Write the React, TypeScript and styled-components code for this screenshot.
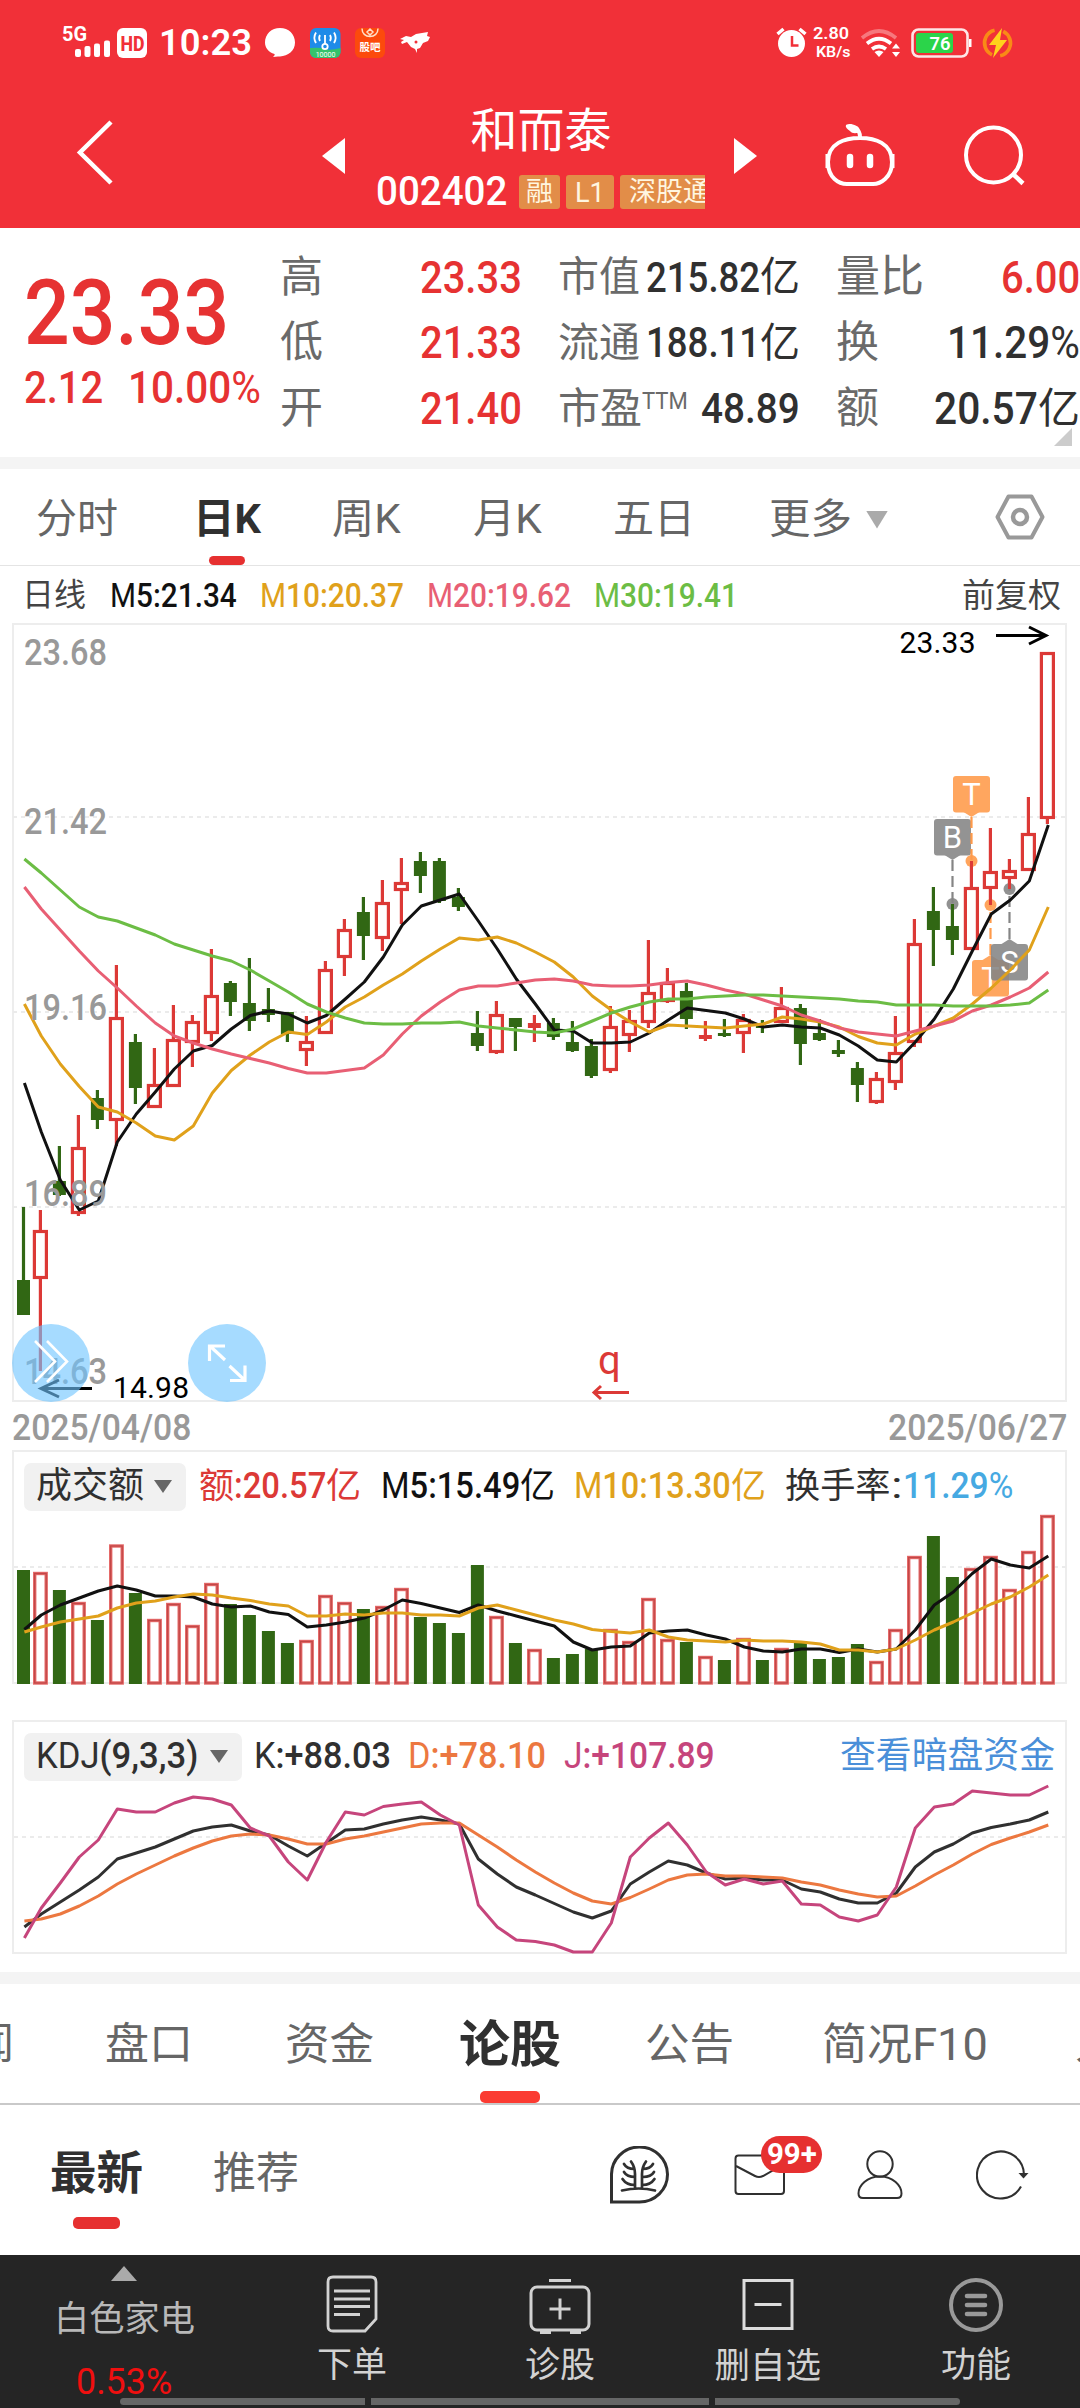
import React, { useLayoutEffect, useRef, useState } from "react";
import styled, { createGlobalStyle } from "styled-components";

const Global = createGlobalStyle`
  * { box-sizing: border-box; }
  body { margin: 0; background: #fff; }
`;

const FONT = `Roboto, "Noto Sans CJK SC", sans-serif`;

const Page = styled.main`
  width: 1080px;
  height: 2408px;
  display: flex;
  flex-direction: column;
  overflow: hidden;
  background: #fff;
  font-family: ${FONT};
  line-height: 1;
`;

/* ---------- text fitted to a fixed advance width ---------- */

type TextProps = { $size: number; $weight?: number; $color?: string; $w: number; $gap?: number };

const TextBox = styled.span<TextProps>`
  display: block;
  flex: none;
  width: ${(p) => p.$w}px;
  margin-left: ${(p) => p.$gap ?? 0}px;
  font-size: ${(p) => p.$size}px;
  font-weight: ${(p) => p.$weight ?? 400};
  color: ${(p) => p.$color ?? "inherit"};
  line-height: 1.2;
  white-space: pre;
`;

const TextRun = styled.span`
  display: inline-block;
  transform-origin: 0 50%;
`;

const Thin = styled.span`
  font-weight: 400;
`;

// Medium-weight figures keep their letters and percent signs in the regular weight.
const withThinLetters = (text: string) =>
  text.split(/([A-Z%]+)/).map((part, i) => (i % 2 ? <Thin key={i}>{part}</Thin> : part));

function Fit({ w, size, weight, color, gap, children }: {
  w: number; size: number; weight?: number; color?: string; gap?: number; children: string;
}) {
  const ref = useRef<HTMLSpanElement>(null);
  const [k, setK] = useState(1);
  useLayoutEffect(() => {
    if (ref.current) setK(w / ref.current.offsetWidth);
  }, [w, size, children]);
  return (
    <TextBox $w={w} $size={size} $weight={weight} $color={color} $gap={gap}>
      <TextRun ref={ref} style={{ transform: `scaleX(${k})` }}>
        {weight === 500 ? withThinLetters(children) : children}
      </TextRun>
    </TextBox>
  );
}

/* ---------- header ---------- */

const Header = styled.header`
  height: 228px;
  flex: none;
  background: #f13038;
  color: #fff;
`;

const StatusBar = styled.div`
  height: 84px;
  display: flex;
  justify-content: space-between;
  align-items: center;
  padding: 0 66px 0 62px;
`;

const StatusGroup = styled.div`
  display: flex;
  align-items: center;
`;

const SpeedColumn = styled.div`
  display: flex;
  flex-direction: column;
  padding-left: 6px;
  width: 50px;
`;

const TitleBar = styled.div`
  height: 144px;
  display: flex;
  align-items: flex-start;
`;

const IconSlot = styled.div<{ $left: number; $top: number }>`
  flex: none;
  margin: ${(p) => p.$top}px 0 0 ${(p) => p.$left}px;
  line-height: 0;
`;

const StockTitle = styled.div`
  width: 330px;
  margin-left: 31px;
  display: flex;
  flex-direction: column;
  align-items: center;
  padding-top: 19px;
`;

const CodeLine = styled.div`
  display: flex;
  align-items: center;
  width: 330px;
  height: 36px;
  margin-top: 15px;
`;

const Tag = styled.span<{ $w: number; $ml: number; $clip?: boolean }>`
  flex: none;
  width: ${(p) => p.$w}px;
  margin-left: ${(p) => p.$ml}px;
  height: 34px;
  display: flex;
  align-items: center;
  padding-left: 7px;
  overflow: hidden;
  background: #e28d48;
  color: #fff6e0;
  border-radius: ${(p) => (p.$clip ? "3px 0 0 3px" : "3px")};
`;

/* ---------- quote summary ---------- */

const Quote = styled.section`
  height: 229px;
  flex: none;
  display: flex;
  color: #303030;
`;

const PriceBlock = styled.div`
  width: 280px;
  padding: 31px 0 0 24px;
  color: #e63232;
`;

const ChangeRow = styled.div`
  display: flex;
  margin-top: -7px;
`;

const StatColumn = styled.div<{ $w: number; $ml: number }>`
  width: ${(p) => p.$w}px;
  margin-left: ${(p) => p.$ml}px;
  padding-top: 17px;
  flex: none;
`;

const StatRow = styled.div`
  height: 65.5px;
  display: flex;
  align-items: center;
  justify-content: space-between;
`;

const StatLabel = styled.div`
  display: flex;
  align-items: center;
  color: #6a6a6a;
`;

const StatValue = styled.div`
  display: flex;
  align-items: center;
`;

const Raised = styled.div`
  padding-bottom: 15px;
`;

const Corner = styled.div`
  margin: -14px 8px 0 auto;
  width: 0;
  height: 0;
  border-left: 18px solid transparent;
  border-bottom: 18px solid #ccc;
`;

const Divider = styled.div<{ $mt?: number }>`
  height: 12px;
  flex: none;
  margin-top: ${(p) => p.$mt ?? 0}px;
  background: #f4f4f4;
`;

/* ---------- tabs ---------- */

const PeriodTabs = styled.nav`
  height: 97px;
  flex: none;
  display: flex;
  border-bottom: 1.5px solid #e4e4e4;
  color: #666;
`;

const Tab = styled.div<{ $ml: number; $pt: number; $active?: boolean }>`
  height: 100%;
  flex: none;
  margin-left: ${(p) => p.$ml}px;
  padding-top: ${(p) => p.$pt}px;
  display: flex;
  flex-direction: column;
  justify-content: space-between;
  align-items: center;
  color: ${(p) => (p.$active ? "#303030" : "#666")};
`;

const Underline = styled.i<{ $w: number; $h: number; $c: string; $mb?: number }>`
  display: block;
  width: ${(p) => p.$w}px;
  height: ${(p) => p.$h}px;
  margin-bottom: ${(p) => p.$mb ?? 0}px;
  border-radius: 5px;
  background: ${(p) => p.$c};
`;

const Legend = styled.div<{ $h: number; $pl: number; $pt?: number }>`
  height: ${(p) => p.$h}px;
  padding: ${(p) => p.$pt ?? 0}px 0 0 ${(p) => p.$pl}px;
  flex: none;
  display: flex;
  align-items: center;
`;

const DateRow = styled.div`
  height: 48px;
  flex: none;
  padding: 1px 13px 0 12px;
  display: flex;
  align-items: center;
  justify-content: space-between;
`;

const Plot = styled.svg`
  display: block;
  flex: none;
  overflow: visible;
`;

const PanelPlot = styled(Plot)`
  margin-left: -14px;
`;

const Panel = styled.section<{ $mt: number }>`
  width: 1055px;
  height: 234px;
  flex: none;
  margin: ${(p) => p.$mt}px 0 0 12px;
  border: 2px solid #ededed;
`;

const Chip = styled.div<{ $w: number }>`
  width: ${(p) => p.$w}px;
  height: 48px;
  flex: none;
  margin-left: 10px;
  padding: 0 14px 0 12px;
  border-radius: 7px;
  background: #f1f1f1;
  display: flex;
  align-items: center;
  justify-content: space-between;
`;

const Caret = styled.i<{ $c: string; $w: number; $h: number; $up?: boolean; $ml?: number }>`
  display: block;
  flex: none;
  margin-left: ${(p) => p.$ml ?? 0}px;
  width: ${(p) => p.$w}px;
  height: ${(p) => p.$h}px;
  background: ${(p) => p.$c};
  clip-path: ${(p) => (p.$up ? "polygon(50% 0, 100% 100%, 0 100%)" : "polygon(0 0, 100% 0, 50% 100%)")};
`;

const MoreTab = styled.div`
  display: flex;
  align-items: center;
`;

const InfoTabs = styled.nav`
  height: 121px;
  flex: none;
  display: flex;
  border-bottom: 2px solid #c9c9c9;
  overflow: hidden;
`;

const FeedTabs = styled.nav`
  height: 150px;
  flex: none;
  display: flex;
`;

const MailSlot = styled(IconSlot)`
  position: relative;
`;

const Badge = styled.span`
  position: absolute;
  left: 27px;
  top: -18px;
  width: 61px;
  height: 37px;
  padding: 0 0 2px 6px;
  border-radius: 19px;
  background: #e63030;
  color: #fff;
  display: flex;
  align-items: center;
`;

/* ---------- bottom bar ---------- */

const BottomBar = styled.footer`
  height: 153px;
  flex: none;
  background: #252525;
  color: #d2d2d2;
  display: flex;
  flex-direction: column;
`;

const BottomItems = styled.div`
  display: flex;
  height: 143px;
`;

const Sector = styled.div`
  width: 248px;
  display: flex;
  flex-direction: column;
  align-items: center;
  padding-top: 11px;
`;

const SectorName = styled.div`
  margin: 18px 0 19px;
`;

const Action = styled.div`
  width: 208px;
  display: flex;
  flex-direction: column;
  align-items: center;
  padding-top: 18px;
  gap: 10px;
  svg { display: block; }
`;

const GestureRow = styled.div`
  display: flex;
  gap: 6px;
  padding-left: 120px;
`;

const GestureBar = styled.i<{ $w: number; $r: string }>`
  width: ${(p) => p.$w}px;
  height: 7px;
  background: #666;
  border-radius: ${(p) => p.$r};
`;

/* ---------- data ---------- */

// up/down, high, body top, body bottom, low
type Candle = [0 | 1, number, number, number, number];
const candles: Candle[] = [
  [0, 1207, 1280, 1315, 1315], [1, 1210, 1230, 1279, 1371], [0, 1146, 1181, 1195, 1196], [1, 1115, 1147, 1214, 1216],
  [0, 1090, 1098, 1120, 1129], [1, 965, 1017, 1121, 1146], [0, 1034, 1042, 1088, 1104], [1, 1048, 1084, 1108, 1108],
  [1, 1005, 1039, 1087, 1087], [1, 1015, 1021, 1043, 1067], [1, 949, 995, 1034, 1041], [0, 981, 983, 1002, 1016],
  [0, 958, 1003, 1021, 1031], [0, 988, 1009, 1015, 1022], [0, 1012, 1012, 1034, 1042], [1, 1016, 1041, 1051, 1066],
  [1, 961, 969, 1034, 1034], [1, 919, 929, 958, 976], [0, 897, 912, 936, 960], [1, 880, 902, 939, 951],
  [1, 858, 882, 891, 924], [0, 852, 861, 876, 893], [0, 858, 861, 901, 903], [0, 888, 897, 907, 911],
  [0, 1011, 1033, 1046, 1051], [1, 1001, 1014, 1053, 1054], [0, 1018, 1018, 1027, 1051], [1, 1015, 1023, 1028, 1042],
  [0, 1018, 1023, 1037, 1040], [0, 1021, 1042, 1051, 1052], [0, 1039, 1046, 1076, 1078], [1, 1006, 1026, 1071, 1073],
  [1, 1010, 1020, 1036, 1052], [1, 940, 992, 1023, 1028], [1, 968, 982, 1002, 1003], [0, 983, 991, 1019, 1029],
  [1, 1021, 1035, 1039, 1041], [0, 1019, 1033, 1036, 1037], [1, 1014, 1019, 1034, 1053], [0, 1020, 1026, 1028, 1033],
  [1, 987, 1007, 1023, 1023], [0, 1004, 1008, 1044, 1065], [0, 1019, 1033, 1040, 1041], [0, 1040, 1050, 1054, 1057],
  [0, 1062, 1068, 1085, 1102], [1, 1072, 1078, 1103, 1104], [1, 1016, 1052, 1083, 1090], [1, 919, 943, 1043, 1047],
  [0, 887, 911, 930, 966], [0, 904, 926, 940, 955], [1, 861, 887, 950, 950], [1, 828, 871, 889, 905],
  [1, 859, 870, 879, 889], [1, 797, 833, 871, 871], [1, 652, 652, 819, 824],
];

const ma5 = [1083, 1132, 1180, 1210, 1201, 1142, 1114, 1092, 1069, 1051, 1045.5, 1029, 1015.5, 1011, 1014, 1023, 1015.5, 999, 982, 957, 925, 906, 900, 894, 921, 949, 979, 1004, 1030, 1031, 1043, 1043, 1042, 1033, 1020, 1008, 1010.5, 1013, 1019, 1027, 1025, 1027, 1028, 1035, 1046, 1060, 1062, 1042, 1019, 989, 951, 914, 900, 881, 825];
const ma10 = [1004, 1036, 1064, 1086.5, 1107, 1112, 1123, 1136, 1140, 1126, 1093, 1070.5, 1055, 1042, 1032, 1034.5, 1022, 1007, 997, 985, 974, 961, 949, 938, 940, 937, 943, 952, 962, 977, 996, 1010, 1022, 1032, 1025, 1026, 1027, 1028, 1026, 1024, 1017, 1019, 1022, 1027, 1036.5, 1043, 1045, 1034, 1026, 1018, 1004, 988, 970, 950, 907];
const ma20 = [887, 909, 930, 951, 971, 988, 1006, 1023, 1036, 1043, 1049, 1054, 1058.5, 1063, 1068.5, 1073, 1073, 1070.5, 1068, 1055, 1034, 1016, 1002, 990, 986, 986, 983, 980, 979, 981, 985, 986, 986, 985, 982.5, 981, 985, 990, 994, 1000, 1006, 1015, 1021, 1028, 1032, 1034, 1036, 1031, 1026, 1021, 1011, 1005, 997, 988, 972];
const ma30 = [859, 873, 890, 907, 917, 921, 928, 935, 944, 950, 956, 961, 970, 981, 992, 1004, 1012, 1018, 1023, 1024, 1024, 1023, 1023, 1022, 1026, 1028, 1030, 1032, 1033, 1029, 1021, 1013, 1007, 1002, 999, 999, 997, 996, 995, 995, 996, 997, 998, 999, 1001, 1002, 1005, 1005, 1005, 1006, 1006, 1006, 1005, 1003, 990];

const volTops = [1570, 1572, 1590, 1602, 1620, 1544.5, 1593, 1619, 1603, 1625, 1583, 1604, 1615, 1631, 1643, 1640, 1595, 1602, 1609, 1606, 1588, 1617, 1623, 1633, 1565, 1616, 1643, 1649, 1658, 1654, 1649, 1629, 1641, 1598, 1639, 1642, 1656, 1660, 1638, 1660, 1648, 1643, 1659, 1657, 1644, 1661, 1629, 1556, 1536, 1577, 1568, 1556, 1589, 1551, 1515];
const vol5 = [1629.5, 1615, 1605, 1598, 1591, 1586, 1590, 1596, 1596, 1597, 1604, 1607, 1606, 1612, 1614.5, 1627, 1625, 1622, 1618, 1610, 1600, 1603.5, 1608, 1612.5, 1605, 1611, 1616, 1621, 1626, 1642, 1650, 1647, 1646, 1633, 1631, 1630, 1635, 1639, 1647, 1651, 1652, 1649, 1649, 1652.5, 1649, 1652, 1649, 1630, 1605, 1592, 1573.5, 1559, 1565, 1568, 1556];
const vol10 = [1632, 1627, 1622, 1619, 1616, 1608, 1603, 1601, 1597, 1594, 1595, 1598, 1600.5, 1604, 1606, 1616, 1616, 1614, 1615, 1613, 1613, 1615, 1615, 1616, 1608, 1605, 1610, 1615, 1620, 1624, 1629.5, 1631.5, 1633, 1630, 1637, 1640, 1641, 1642, 1640, 1641, 1641, 1642, 1644, 1650, 1650, 1652, 1649, 1640, 1630, 1622, 1613, 1604, 1597, 1587, 1575];

const kLine = [1927, 1914, 1902, 1890, 1877, 1859, 1853, 1847, 1839, 1831, 1827, 1825, 1831, 1835, 1846, 1856, 1843, 1830, 1829, 1824, 1820, 1817, 1820, 1824, 1859, 1874, 1887, 1895, 1903.5, 1912, 1918, 1911, 1884, 1872, 1861, 1865, 1873, 1879, 1878, 1880, 1880, 1889, 1892, 1899, 1903, 1903, 1893, 1867, 1852, 1844, 1833, 1827.5, 1824, 1820, 1812];
const dLine = [1921, 1919, 1914, 1906, 1896, 1884, 1874, 1865, 1856, 1848, 1841, 1836, 1834, 1835, 1839, 1844, 1844, 1839, 1836, 1832, 1828, 1824, 1823, 1823, 1835, 1847, 1860, 1872, 1883, 1893, 1901, 1904, 1897.5, 1889, 1880, 1875, 1874, 1876, 1876, 1877, 1878, 1882, 1885, 1890, 1894, 1897, 1896, 1886, 1875, 1865, 1854, 1844.5, 1838, 1832, 1825];
const jLine = [1938, 1908, 1883, 1857, 1840, 1809, 1812, 1812, 1803, 1797, 1799, 1805, 1828, 1836, 1862, 1880, 1842, 1812, 1815, 1806.5, 1804, 1802, 1815, 1825, 1905, 1927, 1940, 1941.5, 1945, 1952, 1952, 1923, 1857, 1838, 1823, 1845, 1872, 1885, 1879, 1884, 1881, 1904, 1905, 1917, 1921, 1915, 1887, 1828, 1807, 1804, 1791, 1793, 1795, 1795, 1786];

const GREEN = "#316714";
const RED = "#dc3936";
const cx = (i: number) => (i === 0 ? 23.5 : 40.4 + 19 * (i - 1));
const path = (ys: number[]) => ys.map((y, i) => `${(cx(i) + 0.9).toFixed(1)},${y}`).join(" ");

function Line({ ys, c }: { ys: number[]; c: string }) {
  return <polyline points={path(ys)} fill="none" stroke={c} strokeWidth={3} strokeLinejoin="round" />;
}

function Marker({ x, y, ch, c, box }: { x: number; y: number; ch: string; c: string; box: number }) {
  const down = box < y;
  const tip = down ? box + 41 : box - 5;
  return (
    <g>
      <line x1={x} x2={x} y1={tip} y2={y} stroke={c} strokeWidth={2.2} strokeDasharray="11 5" />
      <circle cx={x} cy={y} r={6} fill={c} opacity={0.9} />
      <g opacity={0.88}>
        <rect x={x - 18.5} y={box} width={37} height={36.5} rx={3} fill={c} />
        <path d={down ? `M${x - 8} ${box + 36}h16l-8 5z` : `M${x - 8} ${box}h16l-8 -5z`} fill={c} />
      </g>
      <text x={x} y={box + 29} fontSize={31} fill="#fff" textAnchor="middle" fontFamily="Roboto">{ch}</text>
    </g>
  );
}

function CandleChart() {
  const axis: [string, number][] = [["23.68", 665], ["21.42", 834], ["19.16", 1020], ["16.89", 1206], ["14.63", 1384]];
  return (
    <Plot width={1080} height={780} viewBox="0 623 1080 780" fontFamily="Roboto">
      <rect x={13} y={624} width={1053} height={777} fill="#fff" stroke="#ededed" strokeWidth={2} />
      {[817, 1012, 1207].map((y) => (
        <line key={y} x1={13} x2={1066} y1={y} y2={y} stroke="#ebebeb" strokeWidth={2} strokeDasharray="4 4" />
      ))}
      {candles.map(([up, hi, top, bot, lo], i) => {
        const x = cx(i);
        const c = up ? RED : GREEN;
        return (
          <g key={i} stroke={c} strokeWidth={3.2}>
            {hi < top && <line x1={x} x2={x} y1={hi} y2={top} />}
            {lo > bot && <line x1={x} x2={x} y1={bot} y2={lo} />}
            {up && bot - top > 5 ? (
              <rect x={x - 6} y={top + 1.5} width={12} height={bot - top - 3} fill="#fff" />
            ) : (
              <rect x={x - 6.5} y={top} width={13} height={bot - top} fill={c} stroke="none" />
            )}
          </g>
        );
      })}
      <Marker x={952.5} y={904} ch="B" c="#858585" box={819} />
      <Marker x={971.5} y={861} ch="T" c="#ff9a4a" box={776} />
      <Marker x={990.5} y={905} ch="T" c="#ff9a4a" box={960} />
      <Marker x={1009.5} y={889} ch="S" c="#858585" box={944} />
      <path d="M971.5 861v10M990.5 895v10M1009.5 880v9" stroke={RED} strokeWidth={3} />
      <path d="M952.5 904v10" stroke={GREEN} strokeWidth={3} />
      <Line ys={ma5} c="#111" />
      <Line ys={ma10} c="#e0a11b" />
      <Line ys={ma20} c="#e85f74" />
      <Line ys={ma30} c="#6cbd45" />
      {axis.map(([t, y]) => (
        <text key={t} x={24} y={y} fontSize={36.5} fontWeight={500} fill="#999" textLength={83} lengthAdjust="spacingAndGlyphs">{t}</text>
      ))}
      <text x={899.5} y={653} fontSize={30} fill="#000" textLength={76}>23.33</text>
      <path d="M996 635.5h50M1029 627l17 8.5-17 8.5" fill="none" stroke="#000" strokeWidth={3} />
      <text x={113} y={1398} fontSize={30} fill="#000" textLength={76}>14.98</text>
      <path d="M92 1388.5h-51M59 1380l-18 8.5 18 8.5" fill="none" stroke="#000" strokeWidth={3} />
      <text x={598} y={1374} fontSize={40} fill={RED}>q</text>
      <path d="M629 1392.5h-35M601 1386l-7 6.5 7 6.5" fill="none" stroke={RED} strokeWidth={3} />
      <circle cx={51} cy={1363} r={39} fill="rgb(111,197,255)" opacity={0.62} />
      <path d="M35 1341l20 20.5-20 20.5M47 1341l20 20.5-20 20.5" fill="none" stroke="#fff" strokeWidth={2.6} />
      <circle cx={227} cy={1363} r={39} fill="rgb(111,197,255)" opacity={0.62} />
      <path d="M225 1360l-15-14M225 1346h-15.5v15M229.5 1366l15 14M230 1380.5h15v-15" fill="none" stroke="#fff" strokeWidth={3.2} />
    </Plot>
  );
}

function VolumeChart() {
  return (
    <PanelPlot width={1080} height={161} viewBox="0 1521 1080 161">
      <line x1={14} x2={1066} y1={1567} y2={1567} stroke="#ebebeb" strokeWidth={2} strokeDasharray="4 4" />
      {volTops.map((top, i) => {
        const x = cx(i);
        if (!candles[i][0]) return <rect key={i} x={x - 6.5} y={top} width={13} height={1684 - top} fill={GREEN} />;
        return (
          <g key={i}>
            <rect x={x - 5.7} y={top + 1.5} width={11.5} height={1681.5 - top} fill="#fff" stroke="#e56a69" strokeWidth={3.4} />
            <rect x={x - 5.7} y={top + 1.5} width={11.5} height={1681.5 - top} fill="none" stroke="#c24747" strokeWidth={1.3} />
          </g>
        );
      })}
      <Line ys={vol5} c="#111" />
      <Line ys={vol10} c="#e0a11b" />
    </PanelPlot>
  );
}

function KdjChart() {
  return (
    <PanelPlot width={1080} height={161} viewBox="0 1791 1080 161">
      <line x1={14} x2={1066} y1={1837} y2={1837} stroke="#ebebeb" strokeWidth={2} strokeDasharray="4 4" />
      <Line ys={kLine} c="#303030" />
      <Line ys={dLine} c="#ec7840" />
      <Line ys={jLine} c="#c6457c" />
    </PanelPlot>
  );
}

/* ---------- icons ---------- */

function StatusLeftIcons() {
  return (
    <Plot width={190} height={48} viewBox="62 17 190 48">
      <text x={62} y={40} fontSize={20} fontWeight={700} fill="#fff" fontFamily="Roboto" textLength={25} lengthAdjust="spacingAndGlyphs">5G</text>
      <g fill="#fff">
        <rect x={75} y={48} width={6} height={8} rx={2} />
        <rect x={84.5} y={45} width={6} height={11} rx={2} />
        <rect x={94} y={42.5} width={6} height={13.5} rx={2} />
        <rect x={104} y={39.5} width={6} height={16.5} rx={2} />
        <rect x={117} y={27} width={30} height={30} rx={6} />
      </g>
      <text x={120.5} y={49.5} fontSize={21} fontWeight={800} fill="#f13038" fontFamily="Roboto" textLength={24} lengthAdjust="spacingAndGlyphs">HD</text>
      <text x={159} y={54} fontSize={36} fontWeight={600} fill="#fff" fontFamily="Roboto" textLength={93} lengthAdjust="spacingAndGlyphs">10:23</text>
    </Plot>
  );
}

function NotificationIcons() {
  return (
    <Plot width={180} height={48} viewBox="252 17 180 48">
      <path d="M280 27c8.500 0 15 6 15 14.500S288 55 280 55.500h-2l-5 .5c1.500-1.500 2-2 1.500-3-6-2-9.500-6-9.500-11.500C265 33 271.500 27 280 27z" fill="#fff" />
      <rect x={310} y={27} width={30.5} height={30} rx={6} fill="#1f8be8" />
      <path d="M310 47q10-1 15 1t15.500-1v4a6 6 0 0 1-6 6H316a6 6 0 0 1-6-6z" fill="#35c26b" />
      <g fill="none" stroke="#fff" strokeWidth={1.8}>
        <path d="M316 31.500a10 10 0 0 0 0 10.500M334 31.500a10 10 0 0 1 0 10.500M320 34a6 6 0 0 0 0 6M330 34a6 6 0 0 1 0 6M325 34v9" />
        <circle cx={325} cy={45.5} r={2.7} />
      </g>
      <text x={325.5} y={56} fontSize={7} fill="#fff" textAnchor="middle" fontFamily="Roboto">10000</text>
      <rect x={355} y={27} width={30} height={30} rx={6} fill="#fc4a0c" />
      <path d="M362 27.500c0 5 3.500 8 8 8s8-3 8-8M367 31l3-3 3 3-3 3z" fill="none" stroke="#ffe0c8" strokeWidth={1.5} />
      <text x={370} y={50} fontSize={10.5} fontWeight={700} fill="#fff" textAnchor="middle" fontFamily="Noto Sans CJK SC">股吧</text>
      <path d="M400 38l6-3 5 1 5-3 6-1 6-1-1 4 3 1-2 4-5 2-3 5-3 1v4l-2-4-4-2-4-5-5 2-1-2 3-2z" fill="#fff" />
      <circle cx={416} cy={41} r={1.5} fill="#f13038" />
    </Plot>
  );
}

function AlarmIcon() {
  return (
    <svg width={31} height={32} viewBox="776 26 31 32">
      <circle cx={791.5} cy={43.5} r={13.5} fill="#fff" />
      <path d="M777.500 34l6-5M805.500 34l-6-5" stroke="#fff" strokeWidth={3.5} />
      <path d="M792 36v9.500h6.500" stroke="#f13038" strokeWidth={2.5} fill="none" />
    </svg>
  );
}

function StatusRightIcons() {
  return (
    <Plot width={157} height={48} viewBox="858 17 157 48">
      <g fill="none" stroke="#fff" strokeWidth={3.7}>
        <path d="M863 37q17-14 34 0" opacity={0.35} />
        <path d="M868 42.500q12-9.500 24 0" />
        <path d="M873 48q7-5 14 0" />
      </g>
      <path d="M880 56l-4.500-5q4.500-3 9 0zM893 47.500l4-5 4 5zM893 51l4 5 4-5z" fill="#fff" />
      <rect x={913.5} y={28.5} width={55} height={27} rx={6} fill="none" stroke="#fff" strokeOpacity={0.88} strokeWidth={2.6} />
      <rect x={917} y={32} width={37} height={20} rx={3} fill="#2bd44a" />
      <rect x={970} y={38} width={2.5} height={8} fill="#fff" />
      <text x={930.5} y={48.5} fontSize={18.5} fontWeight={600} fill="#fff" fontFamily="Roboto" textLength={21} lengthAdjust="spacingAndGlyphs">76</text>
      <circle cx={998.5} cy={42} r={13} fill="none" stroke="#f98a16" strokeWidth={3.6} strokeDasharray="32 8.84" transform="rotate(115 998.5 42)" />
      <path d="M1003 27l-13 17h7l-3 13 14-18h-7z" fill="#ffd21c" />
    </Plot>
  );
}

const BackIcon = () => (
  <svg width={38} height={66} viewBox="0 0 38 66"><path d="M35 2L4 32.500 35 63" fill="none" stroke="#fff" strokeWidth={4.5} /></svg>
);

const RobotIcon = () => (
  <svg width={70} height={64} viewBox="826 122 70 64" fill="none" stroke="#fff" strokeWidth={4}>
    <path d="M861 138c15 0 32 5 32 24 0 16-12 22-19 22h-26c-8 0-19-6-19-22 0-19 17-24 32-24zM861 138c0-5-1-8-4-8" />
    <path d="M851 124c3 0 10 2 10 7-2 3-8 3-10 0-3-2-5-4-4-6 1-1 3-1 4-1z" fill="#fff" stroke="none" />
    <path d="M828 154v14M894 154v14" strokeWidth={3} />
    <path d="M851 157v8M871 157v8" strokeWidth={6.5} strokeLinecap="round" />
  </svg>
);

const SearchIcon = () => (
  <svg width={62} height={62} viewBox="965 125 62 62" fill="none" stroke="#fff" strokeWidth={4}>
    <circle cx={994.5} cy={155} r={27.5} /><path d="M1014 174l10 9.500" strokeWidth={4.5} />
  </svg>
);

const SettingsIcon = () => (
  <svg width={50} height={48} viewBox="995 493 50 48" fill="none" stroke="#999" strokeLinejoin="round">
    <path d="M1008.500 496.500h23l11 20.500-11 20.500h-23l-11-20.500z" strokeWidth={4} />
    <circle cx={1020} cy={517} r={7} strokeWidth={4.5} />
  </svg>
);

const LeafIcon = () => (
  <svg width={59} height={58} viewBox="0 0 59 58" fill="none" stroke="#303030" strokeWidth={2.7}>
    <path d="M1.500 56V29A28 27.500 0 1 1 29.500 56z" strokeWidth={3} />
    <path d="M25 42V28q0-7-4-12.500M32 42V28q0-7 4-12.500M12 44.500q17-4 33 0M14 18q3 5 10 5M43 18q-3 5-10 5M14 26q3 5 11 5M44 26q-3 5-11 5M12.500 33q4 6 12 6M44.500 33q-4 6-12 6" strokeLinecap="round" />
  </svg>
);

const MailIcon = () => (
  <svg width={52} height={42} viewBox="0 0 52 42" fill="none" stroke="#303030" strokeWidth={2}>
    <rect x={1.5} y={1.5} width={48.5} height={38.5} rx={3} />
    <path d="M2 12l19 10q4 2 8 0l21-12" />
  </svg>
);

const PersonIcon = () => (
  <svg width={46} height={50} viewBox="0 0 46 50" fill="none" stroke="#303030" strokeWidth={2}>
    <circle cx={23} cy={14} r={12.7} />
    <path d="M23 26.500c13 0 21.500 9 21.500 17 0 3-2 4.500-4.500 4.500H6c-2.500 0-4.500-1.500-4.500-4.500 0-8 8.500-17 21.500-17z" />
  </svg>
);

const RefreshIcon = () => (
  <svg width={54} height={50} viewBox="0 0 54 50" fill="none" stroke="#303030" strokeWidth={2.1}>
    <path d="M45 36.500A23.500 23.500 0 1 1 48 25" /><path d="M42.500 23h10l-5 5.500z" fill="#303030" stroke="none" />
  </svg>
);

const OrderIcon = () => (
  <svg width={54} height={62} viewBox="0 0 54 62" fill="none" stroke="#d2d2d2" strokeWidth={2.8}>
    <path d="M8 4h38q5 0 5 5v37L40 58H8q-5 0-5-5V9q0-5 5-5z" />
    <path d="M9 18h36M9 26h36M9 33.500h36M9 41.500h26" strokeWidth={3} />
  </svg>
);

const DiagnoseIcon = () => (
  <svg width={62} height={62} viewBox="0 0 62 62" fill="none" stroke="#d2d2d2" strokeWidth={3}>
    <rect x={2} y={14} width={58} height={43} rx={6} />
    <path d="M20 7.500h22M31 25.500v21M20.500 36h21" /><path d="M11 59h11M41 59h11" strokeWidth={4} />
  </svg>
);

const RemoveIcon = () => (
  <svg width={54} height={62} viewBox="0 0 54 62" fill="none" stroke="#dcdcdc" strokeWidth={3}>
    <rect x={3} y={7.5} width={48} height={48} /><path d="M13.500 31.500h27" />
  </svg>
);

const MenuIcon = () => (
  <svg width={54} height={62} viewBox="0 0 54 62" fill="none" stroke="#999">
    <circle cx={27} cy={32} r={25} strokeWidth={4} /><path d="M18 23h18M18 32h18M18 41h18" strokeWidth={4.6} strokeLinecap="round" />
  </svg>
);

/* ---------- page ---------- */

export default function App() {
  return (
    <Page>
      <Global />
      <Header>
        <StatusBar>
          <StatusGroup>
            <StatusLeftIcons />
            <NotificationIcons />
          </StatusGroup>
          <StatusGroup>
            <AlarmIcon />
            <SpeedColumn>
              <Fit w={36} size={17} weight={600}>2.80</Fit>
              <Fit w={34} size={15} weight={600} gap={3}>KB/s</Fit>
            </SpeedColumn>
            <StatusRightIcons />
          </StatusGroup>
        </StatusBar>
        <TitleBar>
          <IconSlot $left={76} $top={36}><BackIcon /></IconSlot>
          <IconSlot $left={208} $top={54}>
            <svg width={23} height={36}><path d="M0 18L23 0v36z" fill="#fff" /></svg>
          </IconSlot>
          <StockTitle>
            <Fit w={141} size={47}>和而泰</Fit>
            <CodeLine>
              <Fit w={131} size={40} weight={500}>002402</Fit>
              <Tag $w={41} $ml={12}><Fit w={27} size={27}>融</Fit></Tag>
              <Tag $w={48} $ml={6}><Fit w={30} size={28} gap={2}>L1</Fit></Tag>
              <Tag $w={85} $ml={6} $clip><Fit w={81} size={27} gap={2}>深股通</Fit></Tag>
            </CodeLine>
          </StockTitle>
          <IconSlot $left={28} $top={54}>
            <svg width={23} height={36}><path d="M23 18L0 0v36z" fill="#fff" /></svg>
          </IconSlot>
          <IconSlot $left={68} $top={38}><RobotIcon /></IconSlot>
          <IconSlot $left={69} $top={41}><SearchIcon /></IconSlot>
        </TitleBar>
      </Header>

      <Quote>
        <PriceBlock>
          <Fit w={205} size={91} weight={500}>23.33</Fit>
          <ChangeRow>
            <Fit w={79} size={45} weight={500}>2.12</Fit>
            <Fit w={133} size={45} weight={500} gap={25}>10.00%</Fit>
          </ChangeRow>
        </PriceBlock>
        <StatColumn $w={242} $ml={0}>
          {[["高", "23.33"], ["低", "21.33"], ["开", "21.40"]].map(([l, v]) => (
            <StatRow key={l}>
              <StatLabel><Fit w={43} size={43}>{l}</Fit></StatLabel>
              <Fit w={102} size={45} weight={500} color="#e63232">{v}</Fit>
            </StatRow>
          ))}
        </StatColumn>
        <StatColumn $w={242} $ml={36}>
          <StatRow>
            <StatLabel><Fit w={82} size={41}>市值</Fit></StatLabel>
            <StatValue><Fit w={114} size={43} weight={500}>215.82</Fit><Fit w={40} size={41}>亿</Fit></StatValue>
          </StatRow>
          <StatRow>
            <StatLabel><Fit w={82} size={41}>流通</Fit></StatLabel>
            <StatValue><Fit w={114} size={43} weight={500}>188.11</Fit><Fit w={40} size={41}>亿</Fit></StatValue>
          </StatRow>
          <StatRow>
            <StatLabel>
              <Fit w={84} size={42}>市盈</Fit>
              <Raised><Fit w={46} size={24}>TTM</Fit></Raised>
            </StatLabel>
            <Fit w={99} size={43} weight={500}>48.89</Fit>
          </StatRow>
        </StatColumn>
        <StatColumn $w={244} $ml={36}>
          <StatRow>
            <StatLabel><Fit w={88} size={44}>量比</Fit></StatLabel>
            <Fit w={79} size={45} weight={500} color="#e63232">6.00</Fit>
          </StatRow>
          <StatRow>
            <StatLabel><Fit w={43} size={43}>换</Fit></StatLabel>
            <Fit w={133} size={45} weight={500}>11.29%</Fit>
          </StatRow>
          <StatRow>
            <StatLabel><Fit w={43} size={43}>额</Fit></StatLabel>
            <StatValue><Fit w={104} size={45} weight={500}>20.57</Fit><Fit w={42} size={42}>亿</Fit></StatValue>
          </StatRow>
          <Corner />
        </StatColumn>
      </Quote>
      <Divider />

      <PeriodTabs>
        <Tab $ml={36} $pt={26}><Fit w={82} size={41}>分时</Fit></Tab>
        <Tab $ml={75} $pt={26} $active>
          <Fit w={68} size={41} weight={700}>日K</Fit>
          <Underline $w={36} $h={9} $c="#e63030" />
        </Tab>
        <Tab $ml={71} $pt={26}><Fit w={69} size={41}>周K</Fit></Tab>
        <Tab $ml={72} $pt={26}><Fit w={69} size={41}>月K</Fit></Tab>
        <Tab $ml={71} $pt={26}><Fit w={82} size={41}>五日</Fit></Tab>
        <Tab $ml={74} $pt={26}>
          <MoreTab><Fit w={83} size={41}>更多</Fit><Caret $c="#aaa" $w={22} $h={18} $ml={14} /></MoreTab>
        </Tab>
        <IconSlot $left={107} $top={24}><SettingsIcon /></IconSlot>
      </PeriodTabs>

      <Legend $h={57} $pl={22} $pt={2}>
        <Fit w={64} size={32} color="#444">日线</Fit>
        <Fit w={127} size={34} color="#111" gap={24} weight={500}>M5:21.34</Fit>
        <Fit w={144} size={34} color="#e0a11b" gap={23} weight={500}>M10:20.37</Fit>
        <Fit w={144} size={34} color="#e85f74" gap={23} weight={500}>M20:19.62</Fit>
        <Fit w={144} size={34} color="#6cbd45" gap={23} weight={500}>M30:19.41</Fit>
        <Fit w={99} size={33} color="#444" gap={224}>前复权</Fit>
      </Legend>
      <CandleChart />
      <DateRow>
        <Fit w={179} size={36.5} weight={500} color="#999">2025/04/08</Fit>
        <Fit w={179} size={36.5} weight={500} color="#999">2025/06/27</Fit>
      </DateRow>

      <Panel $mt={-1}>
        <Legend $h={69} $pl={0}>
          <Chip $w={162}><Fit w={108} size={36} color="#303030">成交额</Fit><Caret $c="#666" $w={18} $h={13} /></Chip>
          <Fit w={35} size={35} color="#dc3936" gap={13}>额</Fit>
          <Fit w={92} size={36} color="#dc3936" weight={500}>:20.57</Fit>
          <Fit w={35} size={35} color="#dc3936">亿</Fit>
          <Fit w={139} size={36} color="#111" weight={500} gap={20}>M5:15.49</Fit>
          <Fit w={35} size={35} color="#111">亿</Fit>
          <Fit w={157} size={36} color="#e0a11b" weight={500} gap={19}>M10:13.30</Fit>
          <Fit w={35} size={35} color="#e0a11b">亿</Fit>
          <Fit w={106} size={35.5} color="#303030" gap={19}>换手率</Fit>
          <Fit w={12} size={36} color="#303030">:</Fit>
          <Fit w={110} size={36} color="#46a9e2" weight={500}>11.29%</Fit>
        </Legend>
        <VolumeChart />
      </Panel>

      <Panel $mt={36}>
        <Legend $h={69} $pl={0}>
          <Chip $w={218}><Fit w={162} size={37} color="#303030" weight={500}>KDJ(9,3,3)</Fit><Caret $c="#666" $w={18} $h={13} /></Chip>
          <Fit w={137} size={36} color="#303030" weight={500} gap={12}>K:+88.03</Fit>
          <Fit w={138} size={36} color="#ec7840" weight={500} gap={17}>D:+78.10</Fit>
          <Fit w={151} size={36} color="#c6457c" weight={500} gap={18}>J:+107.89</Fit>
          <Fit w={215} size={36} color="#4a8fd9" gap={125}>查看暗盘资金</Fit>
        </Legend>
        <KdjChart />
      </Panel>
      <Divider $mt={18} />

      <InfoTabs>
        <Tab $ml={-29} $pt={35}><Fit w={43} size={43}>闻</Fit></Tab>
        <Tab $ml={91} $pt={35}><Fit w={88} size={43}>盘口</Fit></Tab>
        <Tab $ml={92} $pt={35}><Fit w={89} size={44}>资金</Fit></Tab>
        <Tab $ml={85} $pt={31} $active>
          <Fit w={102} size={50} weight={700}>论股</Fit>
          <Underline $w={60} $h={12} $c="#fb3b32" />
        </Tab>
        <Tab $ml={84} $pt={35}><Fit w={89} size={44}>公告</Fit></Tab>
        <Tab $ml={88} $pt={35}><Fit w={166} size={44}>简况F10</Fit></Tab>
        <Tab $ml={87} $pt={35}><Fit w={43} size={43}>人</Fit></Tab>
      </InfoTabs>

      <FeedTabs>
        <Tab $ml={50} $pt={41} $active>
          <Fit w={93} size={46} weight={700}>最新</Fit>
          <Underline $w={47} $h={12} $c="#e63030" $mb={26} />
        </Tab>
        <Tab $ml={70} $pt={43}><Fit w={86} size={43}>推荐</Fit></Tab>
        <IconSlot $left={311} $top={41}><LeafIcon /></IconSlot>
        <MailSlot $left={65} $top={49}>
          <MailIcon />
          <Badge><Fit w={50} size={30} weight={700}>99+</Fit></Badge>
        </MailSlot>
        <IconSlot $left={71} $top={45}><PersonIcon /></IconSlot>
        <IconSlot $left={73} $top={45}><RefreshIcon /></IconSlot>
      </FeedTabs>

      <BottomBar>
        <BottomItems>
          <Sector>
            <Caret $c="#aaa" $w={26} $h={15} $up />
            <SectorName><Fit w={141} size={35} color="#b8b8b8">白色家电</Fit></SectorName>
            <Fit w={96} size={37} color="#f00f0f">0.53%</Fit>
          </Sector>
          <Action><OrderIcon /><Fit w={70} size={35}>下单</Fit></Action>
          <Action><DiagnoseIcon /><Fit w={70} size={35}>诊股</Fit></Action>
          <Action><RemoveIcon /><Fit w={107} size={35.5}>删自选</Fit></Action>
          <Action><MenuIcon /><Fit w={70} size={35}>功能</Fit></Action>
        </BottomItems>
        <GestureRow>
          <GestureBar $w={245} $r="4px 0 0 4px" />
          <GestureBar $w={338} $r="0" />
          <GestureBar $w={245} $r="0 4px 4px 0" />
        </GestureRow>
      </BottomBar>
    </Page>
  );
}
